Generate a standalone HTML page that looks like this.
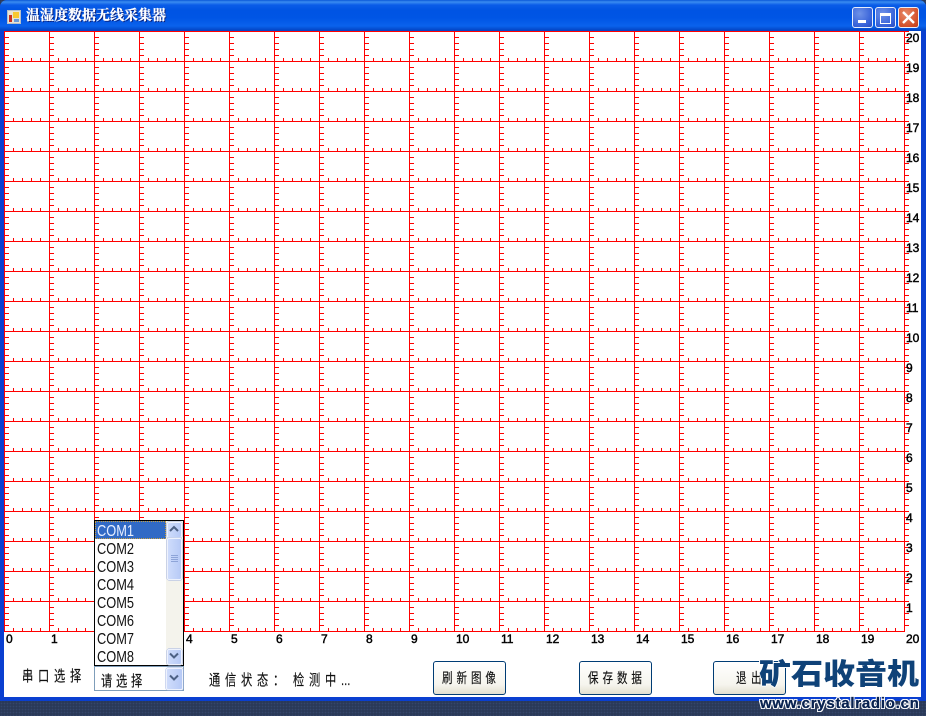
<!DOCTYPE html>
<html lang="zh"><head><meta charset="utf-8"><title>温湿度数据无线采集器</title>
<style>
html,body{margin:0;padding:0;width:926px;height:716px;overflow:hidden;background:#fff}
#root{position:relative;width:926px;height:716px;overflow:hidden;background-color:#2a3958;background-image:radial-gradient(#34466a 35%,transparent 40%);background-size:3px 3px;font-family:"Liberation Sans","Noto Sans CJK SC",sans-serif}
.a{position:absolute}
#win{left:0;top:0;width:926px;height:701px;background:#0a3fd0;border-radius:7px 7px 0 0}
#bar{left:0;top:0;width:926px;height:31px;border-radius:7px 7px 0 0;background:linear-gradient(#0a58d8 0,#3a8cf0 2px,#0a5ce8 5px,#0054e3 10px,#0055e5 18px,#0a62ec 26px,#0346c8 30px)}
#client{left:4px;top:31px;width:917px;height:666px;background:#fff}
#title{left:26px;top:9px;font:bold 14px/16px "Liberation Serif","Noto Serif CJK SC",serif;color:#fff;-webkit-text-stroke:.3px #fff;text-shadow:1px 1px 0 #0a1a70;white-space:nowrap}
.tb{top:7px;width:19px;height:19px;border:1px solid #e8eefc;border-radius:3px;background:radial-gradient(circle at 35% 30%,#6f92e8,#3560d8 70%,#2a4cc0)}
.n{font-size:12px;line-height:14px;color:#000;-webkit-text-stroke:.45px #000;white-space:nowrap}
.c{font-size:15px;line-height:18px;color:#111;white-space:nowrap;letter-spacing:6.33px;transform:scaleX(.75);transform-origin:0 0;-webkit-text-stroke:.15px #111}
.btn{top:661px;width:71px;height:32px;border:1px solid #003c74;border-radius:3px;background:linear-gradient(#fff,#f6f5ee 70%,#e2dfd0)}
.com{left:97px;font-size:16px;line-height:18px;transform:scaleX(.8);transform-origin:0 0;color:#111;white-space:nowrap}
.sb{background:linear-gradient(90deg,#cfdcfb,#b6c9f6);border:1px solid #eef2fd;border-radius:2px;box-shadow:0 0 0 .5px #9fb2e0}
</style></head><body>
<div id="root">
<div class="a" id="win"></div>
<div class="a" id="bar"></div>
<svg class="a" style="left:7px;top:10px" width="15" height="15" viewBox="0 0 15 15" shape-rendering="crispEdges"><rect width="14" height="14" fill="#b8c0c8"/><rect x="1" y="1" width="12" height="12" fill="#e8e4d4"/><rect x="2" y="5" width="3" height="7" fill="#c83020"/><rect x="6" y="2" width="6" height="6" fill="#f8c830"/><rect x="7" y="9" width="5" height="3" fill="#6a9ad8"/></svg>
<div class="a" id="title">温湿度数据无线采集器</div>
<div class="a tb" style="left:852px"><div class="a" style="left:5px;top:12px;width:8px;height:3px;background:#fff"></div></div>
<div class="a tb" style="left:875px"><div class="a" style="left:4px;top:5px;width:9px;height:7px;border:1px solid #fff;border-top:3px solid #fff"></div></div>
<div class="a tb" style="left:898px;background:radial-gradient(circle at 35% 30%,#e88a68,#d4502a 70%,#c03c18)"><svg class="a" style="left:2px;top:2px" width="15" height="15"><path d="M2 2L13 13M13 2L2 13" stroke="#fff" stroke-width="2.4"/></svg></div>
<div class="a" id="client"></div>
<svg class="a" style="left:0;top:0" width="926" height="716" shape-rendering="crispEdges" fill="none" stroke="#f00">
<path stroke-width="1" d="M4.500 31V632M49.500 31V632M94.500 31V632M139.500 31V632M184.500 31V632M229.500 31V632M274.500 31V632M319.500 31V632M364.500 31V632M409.500 31V632M454.500 31V632M499.500 31V632M544.500 31V632M589.500 31V632M634.500 31V632M679.500 31V632M724.500 31V632M769.500 31V632M814.500 31V632M859.500 31V632M904.500 31V632"/>
<path stroke-width="1" d="M4 31.500H905M4 61.500H905M4 91.500H905M4 121.500H905M4 151.500H905M4 181.500H905M4 211.500H905M4 241.500H905M4 271.500H905M4 301.500H905M4 331.500H905M4 361.500H905M4 391.500H905M4 421.500H905M4 451.500H905M4 481.500H905M4 511.500H905M4 541.500H905M4 571.500H905M4 601.500H905M4 631.500H905"/>
<path stroke-width="4" stroke-dasharray="1 5" d="M7 31V631M52 31V631M97 31V631M142 31V631M187 31V631M232 31V631M277 31V631M322 31V631M367 31V631M412 31V631M457 31V631M502 31V631M547 31V631M592 31V631M637 31V631M682 31V631M727 31V631M772 31V631M817 31V631M862 31V631M907 31V631"/>
<path stroke-width="3" stroke-dasharray="1 8" d="M4 59.500H904M4 89.500H904M4 119.500H904M4 149.500H904M4 179.500H904M4 209.500H904M4 239.500H904M4 269.500H904M4 299.500H904M4 329.500H904M4 359.500H904M4 389.500H904M4 419.500H904M4 449.500H904M4 479.500H904M4 509.500H904M4 539.500H904M4 569.500H904M4 599.500H904M4 629.500H904"/>
</svg>
<div class="a n" style="left:906px;top:31px">20</div><div class="a n" style="left:906px;top:61px">19</div><div class="a n" style="left:906px;top:91px">18</div><div class="a n" style="left:906px;top:121px">17</div><div class="a n" style="left:906px;top:151px">16</div><div class="a n" style="left:906px;top:181px">15</div><div class="a n" style="left:906px;top:211px">14</div><div class="a n" style="left:906px;top:241px">13</div><div class="a n" style="left:906px;top:271px">12</div><div class="a n" style="left:906px;top:301px">11</div><div class="a n" style="left:906px;top:331px">10</div><div class="a n" style="left:906px;top:361px">9</div><div class="a n" style="left:906px;top:391px">8</div><div class="a n" style="left:906px;top:421px">7</div><div class="a n" style="left:906px;top:451px">6</div><div class="a n" style="left:906px;top:481px">5</div><div class="a n" style="left:906px;top:511px">4</div><div class="a n" style="left:906px;top:541px">3</div><div class="a n" style="left:906px;top:571px">2</div><div class="a n" style="left:906px;top:601px">1</div>
<div class="a n" style="left:6px;top:632px">0</div><div class="a n" style="left:51px;top:632px">1</div><div class="a n" style="left:186px;top:632px">4</div><div class="a n" style="left:231px;top:632px">5</div><div class="a n" style="left:276px;top:632px">6</div><div class="a n" style="left:321px;top:632px">7</div><div class="a n" style="left:366px;top:632px">8</div><div class="a n" style="left:411px;top:632px">9</div><div class="a n" style="left:456px;top:632px">10</div><div class="a n" style="left:501px;top:632px">11</div><div class="a n" style="left:546px;top:632px">12</div><div class="a n" style="left:591px;top:632px">13</div><div class="a n" style="left:636px;top:632px">14</div><div class="a n" style="left:681px;top:632px">15</div><div class="a n" style="left:726px;top:632px">16</div><div class="a n" style="left:771px;top:632px">17</div><div class="a n" style="left:816px;top:632px">18</div><div class="a n" style="left:861px;top:632px">19</div><div class="a n" style="left:906px;top:632px">20</div>
<div class="a c" style="left:22px;top:668px">串口选择</div>
<div class="a c" style="left:209px;top:672px">通信状态：</div>
<div class="a c" style="left:293px;top:672px">检测中<span style="letter-spacing:0">...</span></div>
<div class="a btn" style="left:433px"></div>
<div class="a btn" style="left:579px"></div>
<div class="a btn" style="left:713px"></div>
<div class="a c" style="left:442px;top:669px;font-size:14px;letter-spacing:5.3px">刷新图像</div>
<div class="a c" style="left:588px;top:669px;font-size:14px;letter-spacing:5.3px">保存数据</div>
<div class="a c" style="left:736px;top:669px;font-size:14px;letter-spacing:6px">退出</div>
<!-- combo -->
<div class="a" style="left:94px;top:666px;width:88px;height:23px;border:1px solid #7f9db9;background:#fff"></div>
<div class="a c" style="left:101px;top:673px;letter-spacing:5px">请选择</div>
<div class="a sb" style="left:166px;top:668px;width:15px;height:20px"></div>
<svg class="a" style="left:169px;top:674px" width="10" height="8"><path d="M1 1.500L5 5.500L9 1.500" fill="none" stroke="#4d6185" stroke-width="2"/></svg>
<!-- list -->
<div class="a" style="left:94px;top:520px;width:88px;height:144px;border:1px solid #000;background:#fff"></div>
<div class="a" style="left:95px;top:521px;width:71px;height:18px;background:#316ac5;outline:1px dotted #c8a040;outline-offset:-1px"></div>
<div class="a com" style="top:523px;color:#e6eeff">COM1</div><div class="a com" style="top:541px">COM2</div><div class="a com" style="top:559px">COM3</div><div class="a com" style="top:577px">COM4</div><div class="a com" style="top:595px">COM5</div><div class="a com" style="top:613px">COM6</div><div class="a com" style="top:631px">COM7</div><div class="a com" style="top:649px">COM8</div>
<div class="a" style="left:166px;top:521px;width:17px;height:144px;background:#f4f3ec"></div>
<div class="a sb" style="left:167px;top:522px;width:13px;height:14px"></div>
<svg class="a" style="left:169px;top:525px" width="10" height="8"><path d="M1 6L5 2L9 6" fill="none" stroke="#4d6185" stroke-width="2"/></svg>
<div class="a sb" style="left:167px;top:538px;width:13px;height:40px"></div>
<svg class="a" style="left:171px;top:555px" width="7" height="8" shape-rendering="crispEdges"><path d="M0 0h7v1H0zM0 2h7v1H0zM0 4h7v1H0zM0 6h7v1H0z" fill="#8ea4d8"/></svg>
<div class="a sb" style="left:167px;top:649px;width:13px;height:14px"></div>
<svg class="a" style="left:169px;top:652px" width="10" height="8"><path d="M1 1.500L5 5.500L9 1.500" fill="none" stroke="#4d6185" stroke-width="2"/></svg>
<!-- watermark -->
<div class="a" style="left:759px;top:653px;width:165px;font:900 32px/42px 'Liberation Sans','Noto Sans CJK SC',sans-serif;color:#0f4278;white-space:nowrap;transform:scaleY(.9);transform-origin:0 50%;text-shadow:1px 0 #fff,-1px 0 #fff,0 1px #fff,0 -1px #fff">矿石收音机</div>
<div class="a" style="left:760px;top:695px;font:bold 15px/18px 'Liberation Sans',sans-serif;letter-spacing:.75px;color:#082250;-webkit-text-stroke:.3px #082250;white-space:nowrap;text-shadow:1px 0 #fff,-1px 0 #fff,0 1px #fff,0 -1px #fff,1px 1px #fff,-1px -1px #fff,1px -1px #fff,-1px 1px #fff">www.crystalradio.cn</div>
</div>
</body></html>
